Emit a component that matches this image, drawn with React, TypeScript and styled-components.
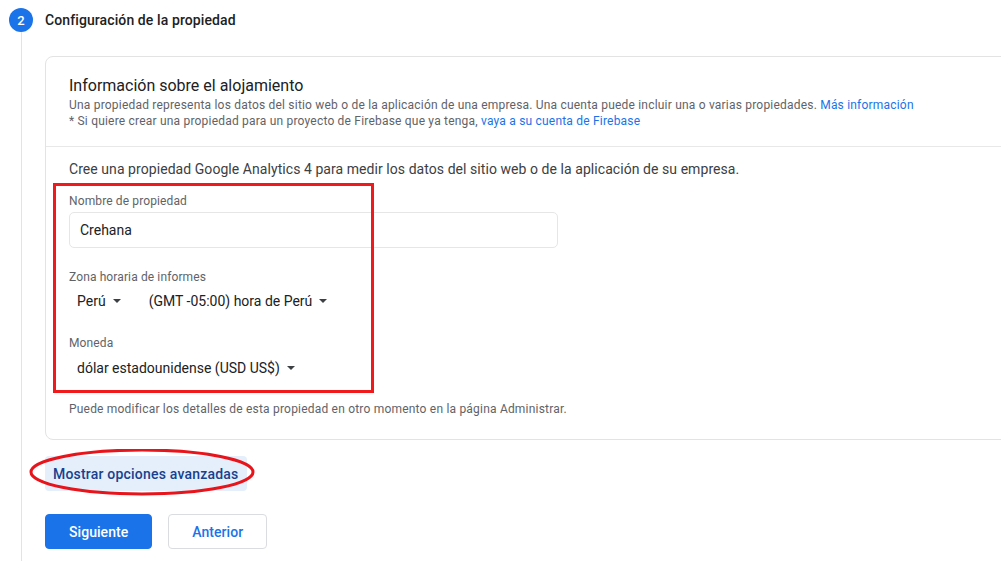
import * as React from 'react';
import styled, { createGlobalStyle } from 'styled-components';

const GlobalStyle = createGlobalStyle`
  html, body {
    margin: 0;
    padding: 0;
    background: #fff;
    overflow: hidden;
  }
  body {
    font-family: Roboto, "Noto Sans", Arial, sans-serif;
    color: #202124;
  }
`;

const Page = styled.div`
  width: 1001px;
  height: 561px;
  overflow: hidden;
`;

const StepHeader = styled.header`
  display: flex;
  align-items: center;
  gap: 12px;
  padding: 8px 0 0 9px;
  height: 24px;
`;

const StepNumber = styled.span`
  width: 24px;
  height: 24px;
  border-radius: 50%;
  background: #1a73e8;
  color: #fff;
  font-size: 13px;
  font-weight: 500;
  display: flex;
  align-items: center;
  justify-content: center;
`;

const StepTitle = styled.h2`
  margin: 0;
  font-size: 14px;
  font-weight: 500;
  color: #202124;
  line-height: 20px;
  letter-spacing: 0.1px;
`;

const StepBody = styled.section`
  margin-left: 21px;
  border-left: 1px solid #e3e3e3;
  padding: 24px 0 30px 23px;
`;

const Card = styled.div`
  width: 1000px;
  border: 1px solid #e3e3e3;
  border-radius: 8px;
  background: #fff;
`;

const CardHeader = styled.div`
  padding: 18px 23px 17px 23px;
  border-bottom: 1px solid #e8e8e8;
`;

const CardTitle = styled.h3`
  margin: 0;
  font-size: 16px;
  font-weight: 400;
  line-height: 22px;
  color: #202124;
`;

const Hint = styled.p<{ $top?: number }>`
  margin: ${p => p.$top || 0}px 0 0 0;
  font-size: 12px;
  line-height: 16px;
  letter-spacing: 0.2px;
  color: #5f6368;
`;

const Link = styled.a`
  color: #1a73e8;
  text-decoration: none;
`;

const CardBody = styled.div`
  position: relative;
  padding: 12px 23px 22px 23px;
`;

const Intro = styled.p`
  margin: 0;
  font-size: 14px;
  line-height: 20px;
  letter-spacing: 0.06px;
  color: #3c4043;
`;

const FieldLabel = styled.label<{ $top: number }>`
  display: block;
  margin-top: ${p => p.$top}px;
  font-size: 12px;
  line-height: 16px;
  letter-spacing: 0.12px;
  color: #5f6368;
`;

const TextInput = styled.div`
  margin-top: 3px;
  width: 477px;
  height: 34px;
  border: 1px solid #e6e6e6;
  border-radius: 5px;
  padding-left: 10px;
  display: flex;
  align-items: center;
  font-size: 14px;
  color: #202124;
`;

const SelectRow = styled.div<{ $top: number }>`
  display: flex;
  gap: 20px;
  margin-top: ${p => p.$top}px;
`;

const Select = styled.span`
  display: inline-flex;
  align-items: center;
  gap: 7px;
  padding-left: 8px;
  font-size: 14px;
  line-height: 20px;
  color: #202124;
`;

const Caret = styled.span`
  width: 0;
  height: 0;
  border-left: 4px solid transparent;
  border-right: 4px solid transparent;
  border-top: 4px solid #3c4043;
`;

const Highlight = styled.div`
  position: absolute;
  left: 7px;
  top: 36px;
  width: 315px;
  height: 204px;
  border: 3px solid #f0191c;
  pointer-events: none;
`;

const AdvancedWrap = styled.div`
  position: relative;
  margin-top: 16px;
  width: 202px;
`;

const AdvancedButton = styled.button`
  height: 35px;
  width: 202px;
  padding: 0 8px;
  border: none;
  border-radius: 4px;
  background: #e4effb;
  color: #17418f;
  font-family: Roboto, Arial, sans-serif;
  font-size: 14px;
  font-weight: 500;
  text-align: left;
  letter-spacing: 0.2px;
`;

const Ellipse = styled.svg`
  position: absolute;
  left: -17px;
  top: -7px;
  pointer-events: none;
`;

const Actions = styled.div`
  display: flex;
  gap: 16px;
  margin-top: 23px;
`;

const ActionButton = styled.button<{ $primary?: boolean }>`
  height: 35px;
  padding: 0 23px;
  border-radius: 4px;
  font-family: Roboto, Arial, sans-serif;
  font-size: 14px;
  font-weight: 500;
  letter-spacing: 0.05px;
  border: 1px solid ${p => (p.$primary ? '#1a73e8' : '#dadce0')};
  background: ${p => (p.$primary ? '#1a73e8' : '#fff')};
  color: ${p => (p.$primary ? '#fff' : '#1a73e8')};
`;

export default function App() {
  return (
    <Page>
      <GlobalStyle />
      <StepHeader>
        <StepNumber>2</StepNumber>
        <StepTitle>Configuración de la propiedad</StepTitle>
      </StepHeader>
      <StepBody>
        <Card>
          <CardHeader>
            <CardTitle>Información sobre el alojamiento</CardTitle>
            <Hint>
              Una propiedad representa los datos del sitio web o de la aplicación de una empresa. Una cuenta puede incluir una o varias propiedades.{' '}
              <Link>Más información</Link>
            </Hint>
            <Hint>
              * Si quiere crear una propiedad para un proyecto de Firebase que ya tenga,{' '}
              <Link>vaya a su cuenta de Firebase</Link>
            </Hint>
          </CardHeader>
          <CardBody>
            <Intro>Cree una propiedad Google Analytics 4 para medir los datos del sitio web o de la aplicación de su empresa.</Intro>
            <FieldLabel $top={14}>Nombre de propiedad</FieldLabel>
            <TextInput>Crehana</TextInput>
            <FieldLabel $top={21}>Zona horaria de informes</FieldLabel>
            <SelectRow $top={6}>
              <Select>Perú <Caret /></Select>
              <Select>(GMT -05:00) hora de Perú <Caret /></Select>
            </SelectRow>
            <FieldLabel $top={24}>Moneda</FieldLabel>
            <SelectRow $top={7}>
              <Select>dólar estadounidense (USD US$) <Caret /></Select>
            </SelectRow>
            <Hint $top={23}>Puede modificar los detalles de esta propiedad en otro momento en la página Administrar.</Hint>
            <Highlight />
          </CardBody>
        </Card>
        <AdvancedWrap>
          <AdvancedButton>Mostrar opciones avanzadas</AdvancedButton>
          <Ellipse width="230" height="50" viewBox="0 0 230 50">
            <ellipse cx="114" cy="23" rx="111" ry="22" fill="none" stroke="#e8141b" strokeWidth="3" />
          </Ellipse>
        </AdvancedWrap>
        <Actions>
          <ActionButton $primary>Siguiente</ActionButton>
          <ActionButton>Anterior</ActionButton>
        </Actions>
      </StepBody>
    </Page>
  );
}
